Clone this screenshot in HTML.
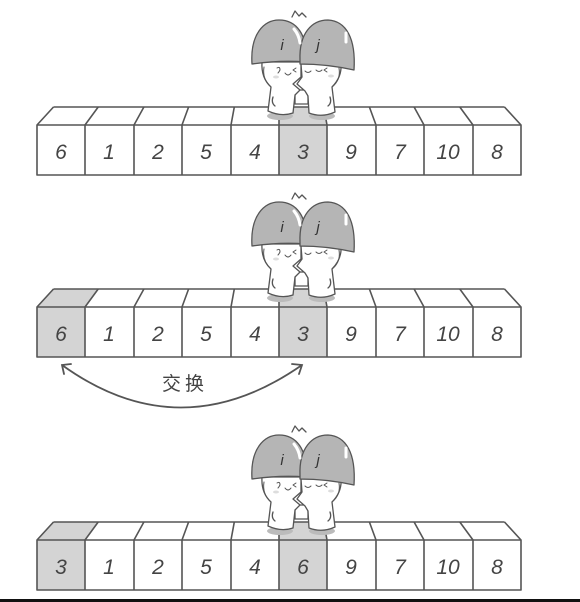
<!DOCTYPE html>
<html><head><meta charset="utf-8"><style>
html,body{margin:0;padding:0;background:#fff;width:580px;height:602px;overflow:hidden}
svg{display:block}
.d{font-family:"Liberation Sans",sans-serif;font-style:italic;font-size:21px;fill:#444;text-anchor:middle}
</style></head><body>
<svg width="580" height="602" viewBox="0 0 580 602" xmlns="http://www.w3.org/2000/svg">
<defs>
<g id="grid" fill="none" stroke="#555" stroke-width="1.6" stroke-linejoin="round">
<path d="M53.5,0 H504.5 M37,18 H521 V68 H37 Z"/>
<path d="M85,18V68 M134,18V68 M182,18V68 M231,18V68 M279,18V68 M327,18V68 M376,18V68 M424,18V68 M473,18V68"/>
<path d="M37,18L53.5,0 M85,18L98.2,0 M134,18L143.9,0 M182,18L188.6,0 M231,18L234.3,0 M279,18L279,0 M327,18L323.7,0 M376,18L369.4,0 M424,18L414.1,0 M473,18L459.8,0 M521,18L504.5,0"/>
</g>
<g id="kids" stroke="#555" stroke-width="1.3" stroke-linejoin="round" stroke-linecap="round">
<ellipse cx="280" cy="116" rx="13" ry="4" fill="#bbb" stroke="none"/>
<ellipse cx="322" cy="116" rx="13" ry="4" fill="#bbb" stroke="none"/>
<path d="M292,17 l3,-6 l4,5 l3,-3 l4,4" fill="none"/>
<path d="M295,90 H308 V104 H295 Z" fill="#fff"/>
<path d="M262,62 Q261,78 271,87 L268,111 Q281,117 293,113 L295,95 L300,90 L293,84 L301,77 L301,62 Z" fill="#fff"/>
<path d="M301,64 L302,77 L297,84 L305,91 L308,96 L309,113 Q322,118 335,112 L332,87 Q342,77 341,64 Z" fill="#fff"/>
<path d="M264,67 q-2,12 7,20 M339,68 q2,12 -7,19" fill="none" stroke-width="1"/>
<path d="M273,97 q-2,6 2,9 M330,97 q2,6 -2,9" fill="none"/>
<path d="M252,64 C250,34 264,20 279,20 C296,20 308,34 306,62 Q280,60 252,64 Z" fill="#b5b5b5"/>
<path d="M300,60 C299,33 312,20 328,20 C346,21 356,38 354,70 Q327,64 300,64 Z" fill="#b5b5b5"/>
<path d="M294,29 q5,6 6,14 M346,33 l0,9" stroke="#fff" stroke-width="3" fill="none"/>
<text x="282" y="50" style="font-family:'Liberation Sans',sans-serif;font-style:italic;font-size:15px;fill:#333;stroke:none" text-anchor="middle">i</text>
<text x="318" y="50" style="font-family:'Liberation Sans',sans-serif;font-style:italic;font-size:15px;fill:#333;stroke:none" text-anchor="middle">j</text>
<path d="M277,68 q3,-2 3,2 q-1,2 -2,3 M285,73 q3,4 6,0 M296,68 l-3,2 l3,2 M305,71 q3,3 6,0 M316,70 q3,3 6,0 M327,68 l-3,2 l3,2" fill="none" stroke-width="1"/>
<ellipse cx="276" cy="77" rx="3" ry="1.5" fill="#ddd" stroke="none"/>
<ellipse cx="331" cy="76" rx="3" ry="1.5" fill="#ddd" stroke="none"/>
</g>
</defs>

<!-- Row 1 -->
<g transform="translate(0,107)">
<path d="M279,18 H327 V68 H279 Z M279,18 L279,0 L323.7,0 L327,18 Z" fill="#d4d4d4"/>
<use href="#grid"/>
<text class="d" x="61" y="52">6</text><text class="d" x="109" y="52">1</text><text class="d" x="158" y="52">2</text><text class="d" x="206" y="52">5</text><text class="d" x="255" y="52">4</text><text class="d" x="303" y="52">3</text><text class="d" x="351" y="52">9</text><text class="d" x="400" y="52">7</text><text class="d" x="448" y="52">10</text><text class="d" x="497" y="52">8</text>
</g>
<use href="#kids"/>

<!-- Row 2 -->
<g transform="translate(0,289)">
<path d="M279,18 H327 V68 H279 Z M279,18 L279,0 L323.7,0 L327,18 Z M37,18 H85 V68 H37 Z M37,18 L53.5,0 L98.2,0 L85,18 Z" fill="#d4d4d4"/>
<use href="#grid"/>
<text class="d" x="61" y="52">6</text><text class="d" x="109" y="52">1</text><text class="d" x="158" y="52">2</text><text class="d" x="206" y="52">5</text><text class="d" x="255" y="52">4</text><text class="d" x="303" y="52">3</text><text class="d" x="351" y="52">9</text><text class="d" x="400" y="52">7</text><text class="d" x="448" y="52">10</text><text class="d" x="497" y="52">8</text>
</g>
<use href="#kids" transform="translate(0,182)"/>
<path d="M62,365 Q180,450 302,365" fill="none" stroke="#555" stroke-width="1.8"/>
<path d="M71,364 L62,365 L64,374 M292,364 L302,365 L299,374" fill="none" stroke="#555" stroke-width="1.8" stroke-linecap="round"/>
<text x="185" y="390" style="font-family:'Liberation Sans','Noto Sans CJK SC',sans-serif;font-size:19px;fill:#444" text-anchor="middle" letter-spacing="4">交换</text>

<!-- Row 3 -->
<g transform="translate(0,522)">
<path d="M279,18 H327 V68 H279 Z M279,18 L279,0 L323.7,0 L327,18 Z M37,18 H85 V68 H37 Z M37,18 L53.5,0 L98.2,0 L85,18 Z" fill="#d4d4d4"/>
<use href="#grid"/>
<text class="d" x="61" y="52">3</text><text class="d" x="109" y="52">1</text><text class="d" x="158" y="52">2</text><text class="d" x="206" y="52">5</text><text class="d" x="255" y="52">4</text><text class="d" x="303" y="52">6</text><text class="d" x="351" y="52">9</text><text class="d" x="400" y="52">7</text><text class="d" x="448" y="52">10</text><text class="d" x="497" y="52">8</text>
</g>
<use href="#kids" transform="translate(0,415)"/>
<rect x="0" y="599" width="580" height="3" fill="#111"/>
</svg>
</body></html>
